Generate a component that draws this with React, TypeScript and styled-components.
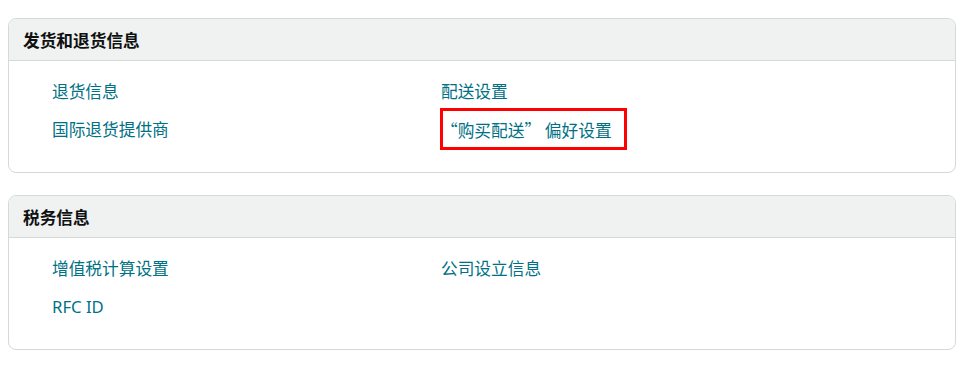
import React from 'react';
import styled, { createGlobalStyle } from 'styled-components';

const GlobalStyle = createGlobalStyle`
  html, body {
    margin: 0;
    padding: 0;
    background: #ffffff;
  }
  body {
    font-family: "Noto Sans", "Noto Sans CJK SC", sans-serif;
    color: #0f1111;
  }
`;

const Page = styled.div`
  display: flex;
  flex-direction: column;
  gap: 22px;
  padding: 18px 15px 0 8px;
`;

const Card = styled.section`
  border: 1px solid #d5d9d9;
  border-radius: 8px;
  background: #ffffff;
  overflow: hidden;
`;

const CardHeader = styled.div`
  height: 41px;
  display: flex;
  align-items: center;
  padding: 0 14px;
  background: #f0f2f2;
  border-bottom: 1px solid #d5d9d9;
`;

const CardTitle = styled.h2`
  margin: 0;
  font-size: 16.7px;
  font-weight: 700;
  color: #0f1111;
`;

const CardBody = styled.div`
  display: grid;
  grid-template-columns: 389px 1fr;
  row-gap: 14px;
  padding: 19px 43px 30px;
`;

const LinkItem = styled.a<{ $highlight?: boolean }>`
  justify-self: start;
  position: relative;
  font-size: 16.7px;
  line-height: 24px;
  color: #007185;
  text-decoration: none;
  cursor: pointer;

  &:hover {
    color: #c7511f;
    text-decoration: underline;
  }

  ${({ $highlight }) =>
    $highlight &&
    `
    font-family: "Noto Sans CJK SC", sans-serif;

    &::after {
      content: '';
      position: absolute;
      top: -10px;
      bottom: -8px;
      left: -1px;
      right: -15px;
      border: 3px solid #ff0000;
      pointer-events: none;
    }
  `}
`;

type Section = {
  title: string;
  links: { label: string; highlight?: boolean }[];
};

const sections: Section[] = [
  {
    title: '发货和退货信息',
    links: [
      { label: '退货信息' },
      { label: '配送设置' },
      { label: '国际退货提供商' },
      { label: '\u201C购买配送\u201D 偏好设置', highlight: true },
    ],
  },
  {
    title: '税务信息',
    links: [
      { label: '增值税计算设置' },
      { label: '公司设立信息' },
      { label: 'RFC ID' },
    ],
  },
];

const App: React.FC = () => {
  return (
    <>
      <GlobalStyle />
      <Page>
        {sections.map((section) => (
          <Card key={section.title}>
            <CardHeader>
              <CardTitle>{section.title}</CardTitle>
            </CardHeader>
            <CardBody>
              {section.links.map((link) => (
                <LinkItem key={link.label} $highlight={link.highlight}>
                  {link.label}
                </LinkItem>
              ))}
            </CardBody>
          </Card>
        ))}
      </Page>
    </>
  );
};

export default App;
